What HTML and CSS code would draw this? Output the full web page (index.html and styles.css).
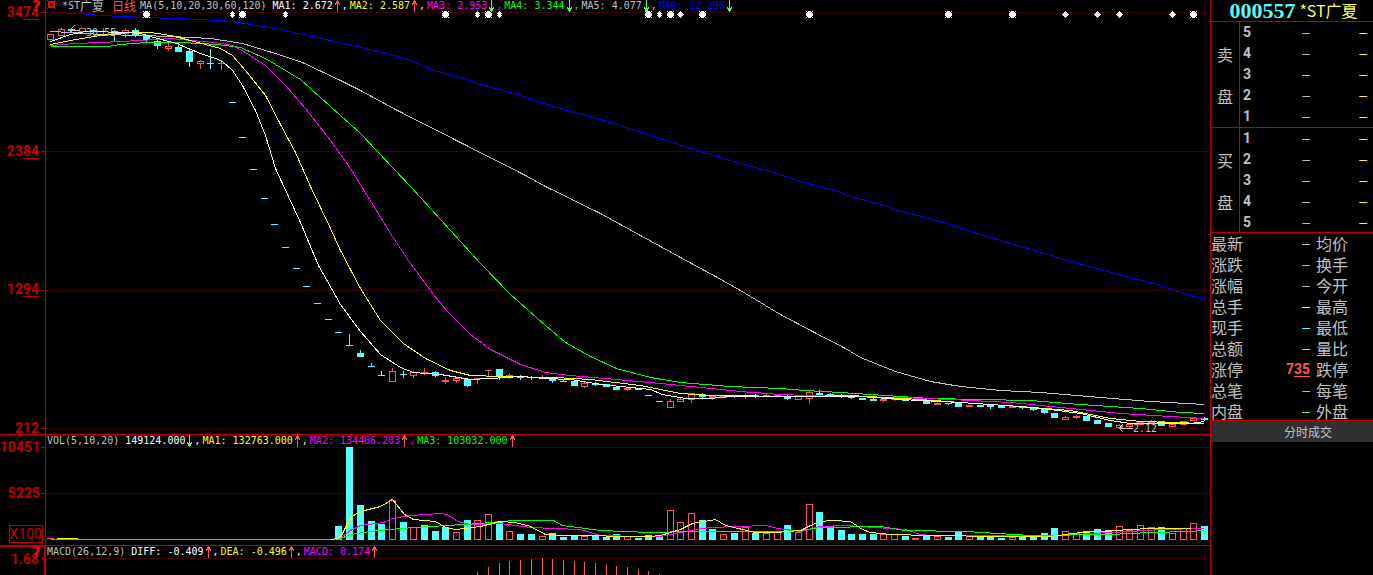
FILE: index.html
```html
<!DOCTYPE html>
<html lang="zh-CN">
<head>
<meta charset="utf-8">
<title>000557 *ST广夏 日线</title>
<link rel="stylesheet" href="styles.css">
</head>
<body>
<svg class="defs" aria-hidden="true">
  <symbol id="up" viewBox="0 0 7 12"><path class="up-ink" d="M3 0h1v12h-1zM2 1h3v2h-3zM1 3h5v1h-5zM1 4h1v1h-1zM5 4h1v1h-1z"/></symbol>
  <symbol id="down" viewBox="0 0 7 12"><path class="down-ink" d="M3 0h1v12h-1zM1 7h1v1h-1zM5 7h1v1h-1zM1 8h5v1h-5zM2 9h3v2h-3z"/></symbol>
</svg>
<main class="terminal">
  <div class="charts">
    <section class="pane">
      <div class="axis">
        <span>34<u>74</u></span><span>23<u>84</u></span><span>12<u>94</u></span><span>212</span>
        <b class="help">?</b>
      </div>
      <svg class="plot" id="price" viewBox="41 0 1169 434" preserveAspectRatio="none">
        <g class="grid"><path d="M46 12.5H1210M46 151.5H1210M46 290.5H1210M46 428.5H1210"/></g>
        <path class="rule" d="M45.5 0V434M41 12.5h4M41 151.5h4M41 290.5h4M41 428.5h4"/>
        <g id="candles"></g>
        <g class="lines" transform="translate(.5 .5)">
          <polyline class="blue" points="50,13 78,13 100,15 146,17 200,19 232,21 280,29 330,40 379,51 410,60 434,70 466,79 477,83 520,95 553,106 600,119 650,135 703,152 737,162 777,173 790,178 840,192 853,197 885,205 897,210 940,221 970,231 1020,246 1045,253 1060,258 1100,269 1160,285 1180,292 1204,299"/>
          <polyline class="grey" points="50,31 70,32 100,34 140,35 170,36 210,38 242,43 275,53 302,62 340,80 360,90 395,109 460,142 525,175 545,186 600,213 640,235 680,257 715,276 740,290 780,314 812,331 845,348 860,357 895,371 930,381 960,386 1000,390 1040,392 1100,397 1150,401 1204,404"/>
          <polyline class="green" points="50,46 107,46 120,44 146,42 182,42 217,44 240,47 265,58 300,79 330,106 360,133 410,186 430,208 470,252 480,263 510,294 545,325 565,342 590,356 616,368 650,377 680,382 730,386 780,388 804,390 840,392 900,396 930,398 1030,400 1080,404 1140,408 1180,412 1204,413"/>
          <polyline class="magenta" points="50,45 75,43 100,42 140,40 170,38 190,40 215,42 232,45 245,52 265,65 285,85 305,108 330,140 350,168 360,184 390,233 410,263 433,294 445,309 470,334 490,349 520,364 545,372 570,375 616,379 660,383 690,386 740,391 780,394 806,395 900,397 950,399 1010,402 1070,408 1120,413 1170,416 1204,418"/>
          <polyline class="yellow" points="50,44 75,39 100,35 130,32 150,32 170,35 190,40 220,48 232,55 245,70 265,95 280,124 295,152 310,186 330,228 340,250 360,288 380,320 403,343 425,358 450,370 470,375 500,376 555,377 590,379 640,385 680,393 710,395 800,396 850,395 920,399 960,402 1020,406 1070,410 1110,418 1140,421 1204,423"/>
          <polyline class="white" points="50,41 70,34 85,31 130,32 140,33 150,36 176,43 200,53 215,58 222,61 232,70 242,85 255,110 265,135 275,168 300,222 318,265 340,304 360,331 380,354 400,367 413,372 440,374 470,379 490,378 520,376 545,378 570,379 600,384 650,389 662,394 685,398 710,398 730,396 780,396 860,396 900,399 960,402 1020,406 1050,409 1080,413 1110,420 1130,423 1190,423 1204,421"/>
        </g>
        <path class="note-line" d="M69.5 30.500H80M69.500 30.500L75 25M69.500 30.500L74 34M1119.500 428.500H1133M1119.500 428.500L1123 424M1119.500 428.500L1123 432"/>
        <text class="note" x="86" y="36">30.55</text>
        <text class="note" x="1133" y="432">2.12</text>
        <g id="events"></g>
      </svg>
      <header class="legend">
        <svg class="square" viewBox="0 0 9 10" width="9" height="10" aria-hidden="true"><path d="M1 1h7v7h-7zM3 3v3h3v-3zM0 0h1v1h-1zM8 0h1v1h-1zM0 8h1v1h-1zM8 8h1v1h-1z"/></svg>
        <span class="name">*ST<span class="cjk">广夏</span></span>
        <span class="period cjk">日线</span>
        <span class="params">MA(5,10,20,30,60,120)</span>
        <span class="item white-ink">MA1: 2.672<svg class="arrow"><use href="#up"/></svg>,</span>
        <span class="item yellow-ink">MA2: 2.587<svg class="arrow"><use href="#up"/></svg>,</span>
        <span class="item magenta-ink">MA3: 2.953<svg class="arrow"><use href="#down"/></svg>,</span>
        <span class="item green-ink">MA4: 3.344<svg class="arrow"><use href="#down"/></svg>,</span>
        <span class="item">MA5: 4.077<svg class="arrow"><use href="#down"/></svg>,</span>
        <span class="item blue-ink">MA6: 12.290<svg class="arrow"><use href="#down"/></svg></span>
      </header>
    </section>
    <section class="pane">
      <div class="axis volume-axis">
        <span>10451</span><span>5225</span><span class="unit">X100</span>
      </div>
      <svg class="plot" id="volume" viewBox="41 435 1169 110" preserveAspectRatio="none">
        <g class="grid"><path d="M46 447.5H1210M46 493.5H1210M46 539.5H1210"/></g>
        <path class="rule" d="M45.5 435V545M41 447.5h4M41 493.5h4M41 539.5h4"/>
        <g id="bars"></g>
        <g class="lines" transform="translate(.5 .5)">
          <polyline class="magenta" points="338,539 350,530 360,525 383,522 392,518 410,515 440,513 447,514 457,521 470,524 500,523 530,527 580,529 600,535 640,536 660,536 690,530 710,527 765,525 778,528 800,531 820,526 845,525 860,526 905,529 920,534 930,535 1060,535 1090,533 1130,531 1160,529 1204,528"/>
          <polyline class="green" points="338,539 350,534 370,531 400,528 430,526 480,523 500,521 515,520 553,520 562,525 600,530 625,531 650,532 690,531 775,531 800,530 820,527 880,526 905,530 965,531 1030,535 1110,534 1150,532 1190,531 1204,530"/>
          <path class="green" d="M50 539H338"/>
          <path class="yellow" d="M56 538H77"/>
          <polyline class="yellow" points="331,539 340,537 350,517 360,511 380,506 392,499 404,514 413,519 435,521 445,527 455,529 480,526 500,521 515,522 530,526 545,534 560,535 650,536 660,535 680,529 692,523 715,519 725,525 755,532 775,532 800,530 810,525 820,521 832,520 850,521 862,529 870,532 890,534 930,535 1000,536 1050,536 1080,532 1100,531 1130,529 1150,528 1190,528"/>
        </g>
      </svg>
      <header class="legend">
        <span class="params">VOL(5,10,20)</span>
        <span class="item white-ink">149124.000<svg class="arrow"><use href="#down"/></svg>,</span>
        <span class="item yellow-ink">MA1: 132763.000<svg class="arrow"><use href="#up"/></svg>,</span>
        <span class="item magenta-ink">MA2: 134406.203<svg class="arrow"><use href="#up"/></svg>,</span>
        <span class="item green-ink">MA3: 103032.000<svg class="arrow"><use href="#up"/></svg></span>
      </header>
    </section>
    <section class="pane active">
      <div class="axis">
        <span>1.68</span>
        <b class="help">?</b>
      </div>
      <svg class="plot" id="macd" viewBox="41 546 1169 29" preserveAspectRatio="none">
        <g class="grid"><path d="M46 558.5H1210"/></g>
        <path class="rule" d="M44.500 546V575M45.500 546V575M41 546.500h4M41 558.500h4"/>
        <g id="histogram"></g>
      </svg>
      <header class="legend">
        <span class="params">MACD(26,12,9)</span>
        <span class="item white-ink">DIFF: -0.409<svg class="arrow"><use href="#up"/></svg>,</span>
        <span class="item yellow-ink">DEA: -0.496<svg class="arrow"><use href="#up"/></svg>,</span>
        <span class="item magenta-ink">MACD: 0.174<svg class="arrow"><use href="#up"/></svg></span>
      </header>
    </section>
  </div>
  <aside class="quote">
    <h1 class="stock"><span class="code">000557</span><span class="stock-name">*ST广夏</span></h1>
    <section class="book">
      <div class="side"><span>卖</span><span>盘</span></div>
      <table class="levels">
        <tr><th>5</th><td>–</td><td>–</td></tr>
        <tr><th>4</th><td>–</td><td>–</td></tr>
        <tr><th>3</th><td>–</td><td>–</td></tr>
        <tr><th>2</th><td>–</td><td>–</td></tr>
        <tr><th>1</th><td>–</td><td>–</td></tr>
      </table>
    </section>
    <section class="book">
      <div class="side"><span>买</span><span>盘</span></div>
      <table class="levels">
        <tr><th>1</th><td>–</td><td>–</td></tr>
        <tr><th>2</th><td>–</td><td>–</td></tr>
        <tr><th>3</th><td>–</td><td>–</td></tr>
        <tr><th>4</th><td>–</td><td>–</td></tr>
        <tr><th>5</th><td>–</td><td>–</td></tr>
      </table>
    </section>
    <section class="details">
      <table class="facts">
        <tr><th>最新</th><td>–</td><th>均价</th></tr>
        <tr><th>涨跌</th><td>–</td><th>换手</th></tr>
        <tr><th>涨幅</th><td>–</td><th>今开</th></tr>
        <tr><th>总手</th><td class="volume-value">–</td><th>最高</th></tr>
        <tr><th>现手</th><td class="cyan-value">–</td><th>最低</th></tr>
        <tr><th>总额</th><td class="cyan-value">–</td><th>量比</th></tr>
        <tr><th>涨停</th><td class="limit">7<u>35</u></td><th>跌停</th></tr>
        <tr><th>总笔</th><td>–</td><th>每笔</th></tr>
        <tr><th>内盘</th><td class="down-value">–</td><th>外盘</th></tr>
      </table>
    </section>
    <h2 class="ticks">分时成交</h2>
  </aside>
</main>
<script src="chart.js"></script>
</body>
</html>
```
FILE: styles.css
```css
* { box-sizing: border-box; }
body { margin: 0; background: #000; color: #c0c0c0; overflow: hidden; }
.defs { display: block; width: 0; height: 0; }
.terminal {
  display: grid;
  grid-template-columns: minmax(0, 1fr) 163px;
  grid-template-rows: minmax(0, 1fr);
  height: 100vh;
}
.charts {
  display: grid;
  min-height: 0;
  grid-template-rows: minmax(0, 435fr) minmax(0, 111fr) minmax(0, 29fr);
}
.pane {
  display: grid;
  position: relative;
  min-height: 0;
  grid-template-columns: 41px minmax(0, 1fr);
  grid-template-rows: minmax(0, 1fr);
  border-bottom: 1px solid #c00000;
}
.pane.active { border-bottom: 0; }
.axis {
  display: flex;
  flex-direction: column;
  align-items: flex-end;
  justify-content: space-between;
  padding: 6px 2px 0 0;
  color: #c00000;
  font: bold 14px/12px Roboto, "Liberation Sans", sans-serif;
}
.axis u, .limit u { text-decoration-thickness: 1px; text-underline-offset: 2px; }
.active .axis { justify-content: flex-start; border-top: 1px solid #c00000; }
.volume-axis { justify-content: flex-start; gap: 34px; padding-right: 1px; padding-bottom: 2px; }
.unit {
  margin: -8px -3px 0 0;
  border: 1px solid #c00000;
  font-weight: normal;
  line-height: 16px;
}
.help {
  position: absolute;
  left: 32px;
  top: 1px;
  color: #f00;
  font: bold 15px/13px "DejaVu Sans", sans-serif;
}
.plot {
  grid-area: 1 / 2;
  display: block;
  width: 100%;
  height: 100%;
  min-height: 0;
  overflow: hidden;
  shape-rendering: crispEdges;
}
.grid { stroke: #400000; }
.rule { stroke: #c00000; }
.lines { fill: none; }
.blue { stroke: #0000ff; }
.grey { stroke: #c0c0c0; }
.green { stroke: #00ff00; }
.magenta { stroke: #ff00ff; }
.yellow { stroke: #ffff00; }
.white { stroke: #fff; }
.rise { fill: none; stroke: #ff5454; }
.fall { fill: #54ffff; }
.fall-wick { stroke: #54ffff; }
.event { fill: #fff; }
.note { fill: #c0c0c0; font: 10px "DejaVu Sans Mono", monospace; }
.note-line { fill: none; stroke: #c0c0c0; }
.legend {
  grid-area: 1 / 2;
  display: flex;
  align-items: flex-start;
  height: 12px;
  padding-left: 6px;
  white-space: pre;
  font: 10px/12px "DejaVu Sans Mono", "Noto Sans CJK SC", monospace;
}
.cjk { font: 12px/12px "Noto Sans CJK SC", sans-serif; }
.square { fill: #f00; margin-right: 6px; shape-rendering: crispEdges; }
.name { margin-right: 8px; display: flex; }
.period { color: #ff5454; margin-right: 4px; }
.params { margin-right: 6px; }
.item { display: flex; margin-right: 2px; }
.arrow { width: 7px; height: 12px; margin: 0 1px; shape-rendering: crispEdges; }
.up-ink { fill: #ff5454; }
.down-ink { fill: #54ff54; }
.white-ink { color: #fff; }
.yellow-ink { color: #ff0; }
.magenta-ink { color: #f0f; }
.green-ink { color: #0f0; }
.blue-ink { color: #00f; }

.quote {
  border-left: 1px solid #c00000;
  font: 16px/21px "Noto Sans CJK SC", sans-serif;
}
.stock {
  display: flex;
  align-items: center;
  justify-content: center;
  gap: 4px;
  height: 21px;
  margin: 0;
  padding-left: 3px;
  font-size: 16px;
  line-height: 21px;
  font-weight: normal;
}
.code { color: #54ffff; font: bold 22px/21px "Liberation Serif", serif; }
.stock-name { color: #ffff54; }
.book {
  display: grid;
  grid-template-columns: 29px 1fr;
  border-top: 1px solid #c00000;
}
.side {
  display: flex;
  flex-direction: column;
  align-items: center;
  justify-content: center;
  border-right: 1px solid #c00000;
  line-height: 42px;
}
table { width: 100%; border-collapse: collapse; table-layout: fixed; }
th, td { height: 21px; padding: 0; line-height: 21px; }
td { text-align: right; font-family: "Liberation Sans", sans-serif; font-size: 14px; }
th { text-align: left; font-weight: normal; }
.levels th { width: 20px; padding-left: 3px; font: bold 14px/21px Roboto, sans-serif; }
.levels td:nth-child(2) { width: 50px; }
.levels td:last-child { padding-right: 6px; color: #ff0; }
.details { margin-top: -1px; border-top: 1px solid #c00000; }
.facts th:first-child { width: 40px; }
.facts td { width: 59px; }
.facts th:last-child { padding-left: 6px; }
.facts .volume-value { color: #ffff54; }
.facts .cyan-value { color: #54ffff; }
.facts .down-value { color: #54ff54; }
.facts .limit { color: #ff5454; font: bold 14px/21px Roboto, sans-serif; }
.ticks {
  position: relative;
  margin: -2px 0 0;
  padding-left: 32px;
  border-top: 1px solid #c00000;
  background: #303030;
  font: 12px/21px "Noto Sans CJK SC", sans-serif;
  text-align: center;
}
```
FILE: chart.js
```js
const NS = "http://www.w3.org/2000/svg";
const xOf = n => Math.round(50 + n * 10.685);

function draw(parent, tag, attrs) {
  const el = document.createElementNS(NS, tag);
  for (const key in attrs) el.setAttribute(key, attrs[key]);
  document.getElementById(parent).appendChild(el);
}

function box(parent, x, top, bottom, rising) {
  if (rising && bottom > top) {
    draw(parent, "rect", { class: "rise", x: x - 2.5, y: top + 0.5, width: 6, height: bottom - top });
  } else if (rising) {
    draw(parent, "path", { class: "rise", d: `M${x - 3} ${top + 0.5}h7` });
  } else {
    draw(parent, "rect", { class: "fall", x: x - 3, y: top, width: 7, height: bottom - top + 1 });
  }
}

// One entry per day: direction, high, body top, body bottom, low.
const days = `r 34 34 39 39|r 28 29 35 35|f 28 29 30 31|r 28 28 31 32|f 29 30 31 32|r 28 31 31 34|f 30 31 33 41|r 28 30 33 37|f 28 30 35 36|f 36 36 39 41
f 40 41 45 48|r 42 46 48 50|f 42 47 51 51|f 48 51 61 66|r 60 61 63 68|f 49 63 63 68|r 60 63 63 69|f 102 102 102 102|f 137 137 137 137|f 169 169 169 169
f 198 198 198 198|f 224 224 224 224|f 247 247 247 247|f 268 268 268 268|f 286 286 286 286|f 303 303 303 303|f 319 319 319 319|f 332 332 332 332|f 334 345 345 345|f 350 353 356 356
f 363 366 366 366|f 371 375 375 375|r 368 371 381 381|f 371 374 374 377|r 371 372 375 377|r 368 372 373 374|f 371 372 375 376|r 377 380 381 383|r 377 378 380 382|f 379 379 385 386
r 378 378 378 383|r 370 370 370 375|f 369 369 376 379|r 373 375 376 378|f 375 376 377 379|f 376 377 377 379|r 375 377 378 378|f 378 378 380 382|f 379 381 381 381|f 381 381 385 385
r 382 383 386 387|f 382 383 384 385|f 384 384 386 386|f 387 387 389 389|r 388 388 389 390|f 388 388 389 389|f 395 395 395 395|f 401 401 401 401|r 399 401 407 407|r 397 399 401 401
r 393 393 399 402|f 393 394 396 398|r 396 396 397 399|r 396 396 397 397|f 395 396 396 397|r 394 395 396 398|f 394 395 396 397|r 394 395 396 396|r 394 395 395 396|f 395 397 398 399
r 396 396 399 399|r 391 392 398 402|f 390 393 394 394|f 393 394 394 395|f 394 395 396 397|f 396 397 397 398|f 398 398 399 399|f 398 399 400 400|r 399 399 400 401|r 398 399 399 400
f 399 399 400 400|r 399 399 399 400|f 400 400 403 403|r 402 403 404 404|f 403 403 403 404|f 403 403 406 406|r 405 405 406 406|f 405 405 406 406|f 405 405 406 408|f 406 406 407 407
r 405 406 407 407|f 406 406 407 408|f 407 407 409 410|f 408 409 412 413|f 413 413 417 417|r 416 417 419 419|r 415 416 417 418|f 416 416 420 420|f 420 420 423 423|f 423 423 426 426
r 424 425 427 428|r 423 424 426 427|r 421 422 424 424|r 420 422 423 423|f 421 421 425 425|r 424 424 426 426|r 421 421 424 424|r 418 418 420 420|f 417 418 419 420`;

days.split(/[|\n]/).forEach((day, n) => {
  const [dir, ...values] = day.split(" ");
  const [high, top, bottom, low] = values.map(Number);
  const x = xOf(n);
  const wick = dir === "r" ? "rise" : "fall-wick";
  if (high < top) draw("candles", "path", { class: wick, d: `M${x + 0.5} ${high}V${top}` });
  if (low > bottom) draw("candles", "path", { class: wick, d: `M${x + 0.5} ${bottom + 1}V${low + 1}` });
  box("candles", x, top, bottom, dir === "r");
});

// Volume bar tops, starting from day 27.
const volumes = `f526 f447 f505 f521 f524 r500 f522 r527 f525 f531 f527 r532 f520 r520 r514 f522 r531 f534 f534 r536 f533 f537 f535
r536 f535 f537 f534 r536 f538 f535 f536 r510 r522 r513 f520 f529 r534 f533 r527 f533 r533 r531 f525 r532 r504 f512 f526 f530 f534 f534
f534 r534 r534 f536 r538 f536 r536 f537 f531 r536 f535 f536 f538 r537 f537 f536 f533 f528 r531 r533 f531 f529 f530 r526 r530 r525 r527
f527 r533 r528 r523 f526`;

volumes.split(/\s+/).forEach((bar, i) => {
  box("bars", xOf(27 + i), Number(bar.slice(1)), 539, bar[0] === "r");
});
draw("bars", "path", { class: "rise", d: "M47 538.5h7" });

[572, 567, 563, 561, 560, 559, 558, 559, 560, 561, 562, 563, 565, 566, 567, 569, 571, 574].forEach((top, i) => {
  draw("histogram", "path", { class: "rise", d: `M${xOf(40 + i) + 0.5} ${top}V575` });
});

const shapes = {
  star: "M-2 -2h1v-1h3v1h1v1h1v3h-1v1h-1v1h-3v-1h-1v-1h-1v-3h1zM-3 -3h1v1h-1zM3 -3h1v1h-1zM-3 3h1v1h-1zM3 3h1v1h-1z",
  tall: "M0 -3h1v1h1v1h1v1h-1v1h1v1h-1v1h-1v1h-1v-1h-1v-1h-1v-1h1v-1h-1v-1h1v-1h1z",
  diamond: "M0 -3h1v1h1v1h1v1h1v1h-1v1h-1v1h-1v1h-1v-1h-1v-1h-1v-1h-1v-1h1v-1h1v-1h1z"
};
const events = {
  star: [146, 242, 445, 488, 648, 670, 702, 809, 948, 1012, 1193],
  tall: [232, 285, 477, 499, 659],
  diamond: [680, 1065, 1097, 1119, 1172]
};
for (const kind in events) {
  for (const x of events[kind]) {
    draw("events", "path", { class: "event", d: shapes[kind], transform: `translate(${x} 14)` });
  }
}
```
